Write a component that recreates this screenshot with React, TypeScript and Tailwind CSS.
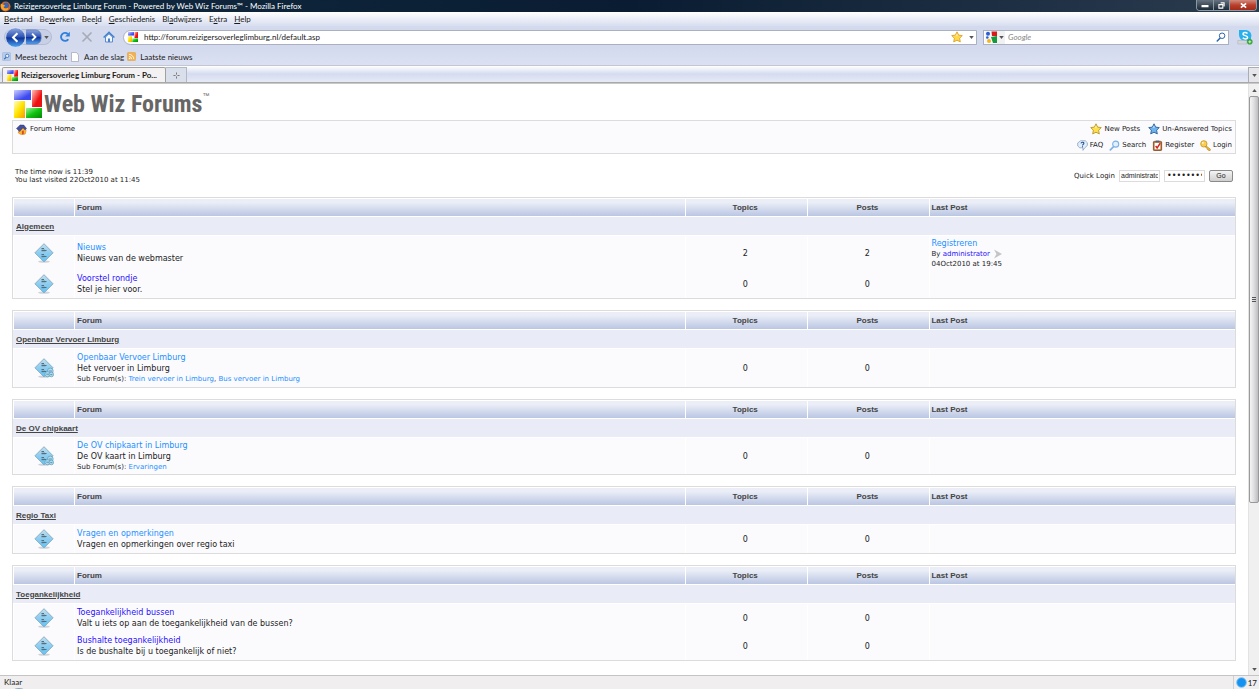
import type { ReactNode } from "react";

type SubForum = { name: string };
type Forum = {
  name: string;
  text: string;
  topics: number;
  posts: number;
  visited?: boolean;
  subs?: SubForum[];
  last?: { title: string; by: string; date: string };
  height: string;
};

const categories: { name: string; forums: Forum[] }[] = [
  {
    name: "Algemeen",
    forums: [
      {
        name: "Nieuws",
        text: "Nieuws van de webmaster",
        topics: 2,
        posts: 2,
        visited: true,
        last: { title: "Registreren", by: "administrator", date: "04Oct2010 at 19:45" },
        height: "h-[34px]",
      },
      { name: "Voorstel rondje", text: "Stel je hier voor.", topics: 0, posts: 0, height: "h-7" },
    ],
  },
  {
    name: "Openbaar Vervoer Limburg",
    forums: [
      {
        name: "Openbaar Vervoer Limburg",
        text: "Het vervoer in Limburg",
        topics: 0,
        posts: 0,
        visited: true,
        subs: [{ name: "Trein vervoer in Limburg" }, { name: "Bus vervoer in Limburg" }],
        height: "h-[38px]",
      },
    ],
  },
  {
    name: "De OV chipkaart",
    forums: [
      {
        name: "De OV chipkaart in Limburg",
        text: "De OV kaart in Limburg",
        topics: 0,
        posts: 0,
        visited: true,
        subs: [{ name: "Ervaringen" }],
        height: "h-9",
      },
    ],
  },
  {
    name: "Regio Taxi",
    forums: [
      {
        name: "Vragen en opmerkingen",
        text: "Vragen en opmerkingen over regio taxi",
        topics: 0,
        posts: 0,
        visited: true,
        height: "h-7",
      },
    ],
  },
  {
    name: "Toegankelijkheid",
    forums: [
      {
        name: "Toegankelijkheid bussen",
        text: "Valt u iets op aan de toegankelijkheid van de bussen?",
        topics: 0,
        posts: 0,
        height: "h-7",
      },
      {
        name: "Bushalte toegankelijkheid",
        text: "Is de bushalte bij u toegankelijk of niet?",
        topics: 0,
        posts: 0,
        height: "h-7",
      },
    ],
  },
];

const menu = [
  ["", "B", "estand"],
  ["Be", "w", "erken"],
  ["Bee", "l", "d"],
  ["", "G", "eschiedenis"],
  ["Bl", "a", "dwijzers"],
  ["E", "x", "tra"],
  ["", "H", "elp"],
];

function Logo({ className }: { className: string }) {
  return (
    <svg viewBox="0 0 28 28" className={className} aria-hidden="true">
      <defs>
        <linearGradient id="lb" x1="0" x2="1" y2="1">
          <stop offset="0" stopColor="#d0d2ff" />
          <stop offset=".7" stopColor="#3c48f0" />
        </linearGradient>
        <linearGradient id="lr" x1="0" x2="1" y2="1">
          <stop offset="0" stopColor="#ffc4bc" />
          <stop offset=".6" stopColor="#ee1111" />
        </linearGradient>
        <linearGradient id="ly" x1="0" x2="1" y2="1">
          <stop offset="0" stopColor="#fffdc8" />
          <stop offset=".5" stopColor="#ffe400" />
          <stop offset="1" stopColor="#f59a00" />
        </linearGradient>
        <linearGradient id="lg" x1="0" x2="1" y2="1">
          <stop offset="0" stopColor="#9cf59c" />
          <stop offset=".5" stopColor="#11c411" />
          <stop offset="1" stopColor="#058505" />
        </linearGradient>
      </defs>
      <path fill="url(#lb)" d="M0 0h17v10H0z" />
      <path fill="url(#lr)" d="M18 0h10v17H18z" />
      <path fill="url(#ly)" d="M0 11h11v17H0z" />
      <path fill="url(#lg)" d="M12 18h16v10H12z" />
    </svg>
  );
}

function Star({ fill, stroke }: { fill: string; stroke: string }) {
  return (
    <svg viewBox="0 0 12 12" className="size-3 shrink-0" aria-hidden="true">
      <path
        d="M6 .8l1.6 3.3 3.7.5-2.7 2.6.7 3.7L6 9.2l-3.300 1.700.700-3.700L.7 4.600l3.700-.5z"
        fill={fill}
        stroke={stroke}
        strokeWidth=".9"
        strokeLinejoin="round"
      />
      <path d="M6 2.500l.9 2.100-2.500.5z" fill="#fff" opacity=".6" />
    </svg>
  );
}

function FirefoxIcon() {
  return (
    <svg viewBox="0 0 12 12" className="size-[11px]" aria-hidden="true">
      <circle cx="6" cy="6" r="5.5" fill="#e2661a" />
      <circle cx="6.6" cy="4.8" r="3.2" fill="#3867b5" />
      <path d="M.8 3c.8.3 1.700.2 2.500 1 1 .1 2 .3 2 1.200-.2.8-1.300.8-1.500 1.600 1 1.900 3.600 1.800 5.200.2C9.500 9.500 6.500 11 4 10 1.500 9 .3 6 .8 3z" fill="#f9a72b" />
    </svg>
  );
}

function HomeIcon() {
  return (
    <svg viewBox="0 0 12 12" className="size-3" aria-hidden="true">
      <path d="M2.500 6v5h7V6L6 2.800z" fill="#f2f7ff" stroke="#4a80c8" strokeWidth=".9" />
      <path d="M.6 6.500L6 1.400l5.400 5.100" fill="none" stroke="#4080cc" strokeWidth="1.500" />
      <path d="M5 7.500h2V11H5z" fill="#4a80c8" />
    </svg>
  );
}

function ForumHomeIcon() {
  return (
    <svg viewBox="0 0 12 12" className="size-[11px]" aria-hidden="true">
      <path d="M3 6l5-2 3 3-1 4-4 .8-3.500-2z" fill="#f9b52c" stroke="#d8761a" strokeWidth=".6" />
      <path d="M.5 4.800L4.500 1l4 .2L11.500 5 10 6.600 7.600 4 4 8.300z" fill="#44509c" stroke="#2a3372" strokeWidth=".5" />
      <path d="M6.500 7.500l2-.5v4l-2 .5z" fill="#dc4a22" />
    </svg>
  );
}

function FaqIcon() {
  return (
    <svg viewBox="0 0 12 12" className="size-[11px]" aria-hidden="true">
      <path d="M4 .8h5l2.300 2.200v3L8.500 8.500 6.500 11.300V8.500H3L.8 6.500V3.200z" fill="#e3eefb" stroke="#7f9cbd" strokeWidth=".8" />
      <path d="M4.300 3.600C4.600 2 7.600 2 7.500 3.700 7.400 4.700 6 4.800 6 6M6 6.800v1" fill="none" stroke="#205293" strokeWidth="1.100" />
    </svg>
  );
}

function SearchIcon({ className, stroke, fill }: { className: string; stroke: string; fill: string }) {
  return (
    <svg viewBox="0 0 12 12" className={className} aria-hidden="true">
      <path d="M5 7.300L1.500 10.800" stroke={stroke} strokeWidth="1.800" strokeLinecap="round" />
      <circle cx="7.300" cy="4.500" r="3.300" fill={fill} stroke={stroke} strokeWidth="1.200" />
    </svg>
  );
}

function RegisterIcon() {
  return (
    <svg viewBox="0 0 12 12" className="size-[11px]" aria-hidden="true">
      <rect x="1.500" y="1.500" width="9" height="10" rx="1" fill="#b3651f" stroke="#6f3c10" strokeWidth=".8" />
      <path d="M2.800 3h6.400v7.200H2.800z" fill="#fff" />
      <path d="M4 .6h4v2H4z" fill="#5a6070" />
      <path d="M4 6.500L5.600 8.600 9 3.500" fill="none" stroke="#d81f1f" strokeWidth="1.600" />
    </svg>
  );
}

function KeyIcon() {
  return (
    <svg viewBox="0 0 12 12" className="size-[11px]" aria-hidden="true">
      <path d="M5.500 5.500l5.800 4.500-.2 1.400-1.700.1-.4-1.200-1.200-.1-.1-1.200L5 7z" fill="#f3bd2a" stroke="#a87412" strokeWidth=".6" />
      <circle cx="4.200" cy="4.200" r="3.500" fill="#f9cf4a" stroke="#b98216" strokeWidth=".7" />
      <circle cx="3.100" cy="3.200" r=".9" fill="#fff" />
    </svg>
  );
}

function ForumIcon({ subs }: { subs?: boolean }) {
  return (
    <svg viewBox="0 0 20 20" className="ml-5 size-5" aria-hidden="true">
      <defs>
        <linearGradient id="fi" x1="0" x2="0" y1="0" y2="1">
          <stop offset="0" stopColor="#c4dfec" />
          <stop offset=".5" stopColor="#8ecdf0" />
          <stop offset="1" stopColor="#5cc4fa" />
        </linearGradient>
      </defs>
      <ellipse cx="10" cy="18.600" rx="6" ry="1.200" fill="#cfd3d8" />
      <path d="M10 .7l9.100 9.100-9.100 9.100L.9 9.800z" fill="url(#fi)" stroke="#83a9bd" strokeWidth=".9" strokeLinejoin="round" />
      <path d="M7.500 5.500h2.500M7.500 7.500h5M7.500 11.500h2.500M7.500 13.500h5" stroke="#4f6f82" />
      <path d="M7.500 6.500h3.500M7.500 8.500h4M7.500 12.500h3.500M7.500 14.500h3" stroke="#86a9bb" strokeWidth=".7" />
      {subs && (
        <g fill="#a9dcf5" stroke="#5f99b6" strokeWidth=".7">
          <circle cx="16.300" cy="13" r="2.900" />
          <circle cx="13.500" cy="16.200" r="2.600" />
          <circle cx="17.300" cy="16.500" r="2.300" />
          <path d="M14.800 13h3M12.300 16.200h2.400M16.300 16.600h2" stroke="#4f6f82" />
        </g>
      )}
    </svg>
  );
}

function Caret({ className = "" }: { className?: string }) {
  return (
    <svg viewBox="0 0 6 4" className={`h-[3px] w-[5px] ${className}`} aria-hidden="true">
      <path d="M0 0h6L3 4z" fill="#555" />
    </svg>
  );
}

function TitleBar() {
  return (
    <header className="flex h-3 items-center bg-linear-to-r from-[#102a40] via-[#0a1c31] to-[#2b3c4f] text-white">
      <FirefoxIcon />
      <span className="ml-[3px] flex-1 truncate text-[8px] leading-3">
        Reizigersoverleg Limburg Forum - Powered by Web Wiz Forums™ - Mozilla Firefox
      </span>
      <div className="mr-[2px] flex h-[11px] self-start overflow-hidden rounded-b-sm border border-t-0 border-[#8d98a5]">
        <button aria-label="Minimize" className="flex w-[17px] items-center justify-center border-r border-[#8d98a5] bg-linear-to-b from-[#66727f] to-[#1d2a38]">
          <svg viewBox="0 0 8 6" className="h-[6px] w-2"><path d="M.5 3h7v2.200h-7z" fill="#fff" /></svg>
        </button>
        <button aria-label="Restore" className="flex w-4 items-center justify-center border-r border-[#8d98a5] bg-linear-to-b from-[#66727f] to-[#1d2a38]">
          <svg viewBox="0 0 8 8" className="size-[7px]"><path d="M3 1h4v4M1 3h4.500v4H1z" fill="none" stroke="#fff" strokeWidth="1.200" /></svg>
        </button>
        <button aria-label="Close" className="flex w-[26px] items-center justify-center bg-linear-to-b from-[#d08a7e] via-[#b8402c] to-[#a52a18]">
          <svg viewBox="0 0 8 8" className="size-[7px]"><path d="M1 1.500l6 5M7 1.500l-6 5" stroke="#fff" strokeWidth="1.900" /></svg>
        </button>
      </div>
    </header>
  );
}

function MenuBar() {
  return (
    <nav className="flex h-[14px] items-center gap-[7px] bg-linear-to-b from-white to-[#d8def0] pl-1 text-[8px] leading-3">
      {menu.map(([a, key, b]) => (
        <button key={a + key + b}>
          {a}
          <u>{key}</u>
          {b}
        </button>
      ))}
    </nav>
  );
}

function NavToolbar() {
  return (
    <div className="flex h-[22px] items-center bg-[#d3daed] pl-1 pr-[6px]">
      <div className="flex h-4 w-12 items-center rounded-full border border-[#b3bdd6] bg-[#c8d0e5]">
        <button aria-label="Terug">
          <svg viewBox="0 0 22 22" className="size-[21px]">
            <defs>
              <linearGradient id="bk" x1="0" x2="0" y1="0" y2="1">
                <stop offset="0" stopColor="#8fa8de" />
                <stop offset=".48" stopColor="#2c52b4" />
                <stop offset=".52" stopColor="#0f3298" />
                <stop offset="1" stopColor="#4fa8f4" />
              </linearGradient>
            </defs>
            <circle cx="11" cy="11" r="10.300" fill="url(#bk)" stroke="#e4eaf6" strokeWidth=".8" />
            <path d="M13 6.500L8.500 11l4.500 4.500" fill="none" stroke="#fff" strokeWidth="2.200" />
          </svg>
        </button>
        <button aria-label="Vooruit">
          <svg viewBox="0 0 17 16" className="h-4 w-4">
            <rect x="-4" y=".5" width="20" height="15" rx="6" fill="url(#bk)" stroke="#5874b4" strokeWidth=".8" />
            <path d="M6.500 4.500L10 8l-3.500 3.500" fill="none" stroke="#fff" strokeWidth="2" />
          </svg>
        </button>
        <Caret className="ml-[2px]" />
      </div>
      <div className="ml-[7px] flex items-center gap-[10px]">
        <button aria-label="Vernieuwen">
          <svg viewBox="0 0 12 12" className="size-3">
            <path d="M9.300 8.200A4 4 0 1 1 8.800 3" fill="none" stroke="#2f7fdc" strokeWidth="1.900" />
            <path d="M10.800.8v4.700H6.200z" fill="#2f7fdc" />
          </svg>
        </button>
        <button aria-label="Stoppen">
          <svg viewBox="0 0 12 12" className="size-3">
            <path d="M1.500 1.500l9 9M10.500 1.500l-9 9" stroke="#a7abb5" strokeWidth="1.600" />
          </svg>
        </button>
        <button aria-label="Startpagina">
          <HomeIcon />
        </button>
      </div>
      <div className="ml-2 flex h-[15px] flex-1 items-center rounded-l-full border border-[#aab0bf] bg-white pl-1">
        <Logo className="size-[10px]" />
        <input
          aria-label="Adres"
          defaultValue="http://forum.reizigersoverleglimburg.nl/default.asp"
          className="ml-[6px] min-w-0 flex-1 text-[8px] leading-3 outline-none"
        />
        <Star fill="#ffd94a" stroke="#dba12a" />
        <Caret className="mr-[2px] ml-[6px]" />
      </div>
      <div className="ml-[6px] flex h-[15px] w-[246px] items-center border border-[#aab0bf] bg-white">
        <svg viewBox="0 0 12 12" className="ml-[1px] size-3" aria-hidden="true">
          <path d="M0 0h12v12H0z" fill="#f5f7ff" />
          <path d="M6.500.5H12V5H7z" fill="#d91a1a" />
          <path d="M6 6l6-1v7H8z" fill="#159a3a" />
          <circle cx="3" cy="2.800" r="2" fill="#2a5fd0" />
          <circle cx="2.300" cy="6.500" r="1.300" fill="#2a5fd0" />
          <circle cx="4" cy="10" r="2" fill="#f6b51c" />
        </svg>
        <div className="flex h-full w-[8px] items-center justify-center bg-[#f1f1f1]">
          <Caret />
        </div>
        <input
          aria-label="Zoeken"
          placeholder="Google"
          className="ml-[3px] min-w-0 flex-1 text-[8px] leading-3 italic outline-none placeholder:text-[#888]"
        />
        <SearchIcon className="mr-[2px] size-[10px]" stroke="#2c66ae" fill="#fff" />
      </div>
      <button aria-label="Skype" className="ml-2">
        <svg viewBox="0 0 16 16" className="size-4">
          <path d="M2 1h7a5.500 5.500 0 0 1 5 7.500V12H8A6 6 0 0 1 2 6z" fill="#27b0ec" />
          <path d="M10.500 4.500C9 3 5.800 3.400 6 5.200c.2 1.800 4.600 1.100 4.600 3.200 0 1.900-3.400 2-4.800.3" fill="none" stroke="#fff" strokeWidth="1.500" />
          <path d="M.8 11.500h9V15h-9z" fill="#d3d7da" stroke="#a9afb4" strokeWidth=".5" />
          <circle cx="12.800" cy="12.800" r="2.800" fill="#37a337" />
          <path d="M12.800 11.300v3M11.300 12.800h3" stroke="#d8f5d0" strokeWidth=".9" />
        </svg>
      </button>
    </div>
  );
}

function Bookmark({ icon, children }: { icon: ReactNode; children: ReactNode }) {
  return (
    <a href="#" className="flex items-center gap-1">
      {icon}
      {children}
    </a>
  );
}

function BookmarksBar() {
  return (
    <div className="flex h-[17px] items-center gap-[3px] bg-linear-to-b from-[#d3daed] to-[#dbe1f2] pl-[2px] text-[8px] leading-3">
      <Bookmark
        icon={
          <svg viewBox="0 0 10 10" className="size-[9px]">
            <rect x=".5" y=".5" width="9" height="9" rx="1" fill="#b4cceb" stroke="#9db8dc" strokeWidth=".7" />
            <path d="M4.500 6L2.500 8" stroke="#2f62a8" strokeWidth="1.200" />
            <circle cx="5.800" cy="4.300" r="1.900" fill="#eaf3ff" stroke="#2f62a8" strokeWidth=".8" />
          </svg>
        }
      >
        Meest bezocht
      </Bookmark>
      <Bookmark
        icon={
          <svg viewBox="0 0 10 10" className="size-[10px]">
            <path d="M1.500.5h5L8.500 3v6.500h-7z" fill="#fff" stroke="#a0a4ac" strokeWidth=".7" />
          </svg>
        }
      >
        Aan de slag
      </Bookmark>
      <Bookmark
        icon={
          <svg viewBox="0 0 10 10" className="size-[9px]">
            <rect x=".5" y=".5" width="9" height="9" rx="1" fill="#f5b04c" stroke="#dfa040" strokeWidth=".6" />
            <path d="M2.200 5a2.900 2.900 0 0 1 2.900 2.900M2.200 2.600a5.300 5.300 0 0 1 5.300 5.300" fill="none" stroke="#fff" />
            <circle cx="2.800" cy="7.300" r=".8" fill="#fff" />
          </svg>
        }
      >
        Laatste nieuws
      </Bookmark>
    </div>
  );
}

function TabBar() {
  return (
    <div className="flex h-[18px] items-end border-y border-t-[#c3c7d0] border-b-[#a9a9a9] bg-linear-to-b from-white via-[#d5dcf0] to-[#e6eaf6]">
      <div className="ml-[2px] flex h-[15px] w-[164px] items-center rounded-t-xs border border-b-0 border-[#a0a0a0] bg-[#f3f1f1] px-1">
        <Logo className="size-[11px] shrink-0" />
        <span className="ml-[3px] truncate text-[8px] leading-3 font-bold">Reizigersoverleg Limburg Forum - Po...</span>
      </div>
      <button aria-label="Nieuw tabblad" className="flex h-[15px] w-[21px] items-center justify-center border border-b-0 border-l-0 border-[#b4b8c4] bg-[#dadfec]">
        <svg viewBox="0 0 8 8" className="size-[7px]">
          <path d="M4 .5v2.500M4 5v2.500M.5 4H3M5 4h2.500" stroke="#777" strokeWidth="1.100" />
        </svg>
      </button>
      <button aria-label="Alle tabbladen" className="ml-auto flex h-[15px] w-[11px] items-center justify-center border border-r-0 border-b-0 border-[#a9adb8] bg-[#e6e6ea]">
        <Caret />
      </button>
    </div>
  );
}

function ForumTable({ name, forums }: { name: string; forums: Forum[] }) {
  return (
    <table className="w-full table-fixed border-separate border-spacing-0 border border-[#dcdcdc] bg-white text-[8px] leading-[11px]">
      <colgroup>
        <col className="w-[5%]" />
        <col className="w-[50%]" />
        <col className="w-[10%]" />
        <col className="w-[10%]" />
        <col className="w-[25%]" />
      </colgroup>
      <thead className="font-['Liberation_Sans',Arial,sans-serif] text-[#444]">
        <tr className="h-[19px] [&>th]:border [&>th]:border-r-0 [&>th]:border-white [&>th]:bg-linear-to-b [&>th]:from-[#ebeef7] [&>th]:from-20% [&>th]:to-[#bac6e2]">
          <th></th>
          <th className="pl-[2px] text-left">Forum</th>
          <th className="pr-[3px]">Topics</th>
          <th className="pr-[3px]">Posts</th>
          <th className="pl-[1px] text-left">Last Post</th>
        </tr>
      </thead>
      <tbody>
        <tr className="h-[19px]">
          <td colSpan={5} className="border-b border-white bg-[#e9ecf6] pl-[3px] font-['Liberation_Sans',Arial,sans-serif] font-bold text-[#444]">
            <a href="#" className="underline">
              {name}
            </a>
          </td>
        </tr>
        {forums.map((f) => (
          <tr key={f.name} className={`${f.height} [&>td]:border-l [&>td]:border-white [&>td]:bg-[#fbfbfe]`}>
            <td>
              <ForumIcon subs={!!f.subs} />
            </td>
            <td className="pl-[2px]">
              <a href="#" className={f.visited ? "text-[#1e90ff]" : "text-[#2a10ff]"}>
                {f.name}
              </a>
              <div>{f.text}</div>
              {f.subs && (
                <div className="text-[7px]">
                  Sub Forum(s):{" "}
                  {f.subs.map((s, i) => (
                    <span key={s.name}>
                      {i > 0 && ", "}
                      <a href="#" className="text-[#1e90ff]">
                        {s.name}
                      </a>
                    </span>
                  ))}
                </div>
              )}
            </td>
            <td className="pr-[3px] text-center">{f.topics}</td>
            <td className="pr-[3px] text-center">{f.posts}</td>
            <td className="pl-[1px]">
              {f.last && (
                <>
                  <a href="#" className="block leading-[11px] text-[#1e90ff]">
                    {f.last.title}
                  </a>
                  <div className="flex items-center text-[7px] leading-[10px]">
                    By&nbsp;
                    <a href="#" className="text-[#2a10ff]">
                      {f.last.by}
                    </a>
                    <svg viewBox="0 0 8 10" className="ml-1 h-[10px] w-2" aria-hidden="true">
                      <path d="M0 .5L8 5 0 9.500 2.500 5z" fill="#c4c4c4" />
                    </svg>
                  </div>
                  <div className="text-[7px] leading-[10px]">{f.last.date}</div>
                </>
              )}
            </td>
          </tr>
        ))}
      </tbody>
    </table>
  );
}

function ForumNav() {
  return (
    <div className="flex h-[34px] justify-between border border-[#dcdcdc] bg-[#fbfbfe] px-[3px] text-[7px] leading-4">
      <a href="#" className="flex h-4 items-center gap-[3px]">
        <ForumHomeIcon />
        Forum Home
      </a>
      <div className="flex flex-col items-end">
        <div className="flex gap-2">
          <a href="#" className="flex items-center gap-[2px]">
            <Star fill="#ffe04a" stroke="#b9952a" />
            New Posts
          </a>
          <a href="#" className="flex items-center gap-[2px]">
            <Star fill="#6db4ee" stroke="#2d5f9a" />
            Un-Answered Topics
          </a>
        </div>
        <div className="flex gap-[6px]">
          <a href="#" className="flex items-center gap-[2px]">
            <FaqIcon />
            FAQ
          </a>
          <a href="#" className="flex items-center gap-[2px]">
            <SearchIcon className="size-[11px]" stroke="#7fb0e2" fill="#dff0ff" />
            Search
          </a>
          <a href="#" className="flex items-center gap-[2px]">
            <RegisterIcon />
            Register
          </a>
          <a href="#" className="flex items-center gap-[2px]">
            <KeyIcon />
            Login
          </a>
        </div>
      </div>
    </div>
  );
}

function QuickLogin() {
  return (
    <form className="flex items-center gap-1" onSubmit={(e) => e.preventDefault()}>
      <label htmlFor="member">Quick Login</label>
      <input
        id="member"
        defaultValue="administrato"
        className="h-3 w-[41px] border border-[#dcdcdc] bg-white px-[1px] font-['Liberation_Sans',Arial,sans-serif] text-[7px] outline-none"
      />
      <input
        aria-label="Password"
        type="password"
        defaultValue="wachtwoord12"
        className="h-3 w-[41px] border border-[#dcdcdc] bg-white px-[2px] text-[8px] outline-none"
      />
      <button className="h-3 w-6 rounded-xs border border-[#8a8a8a] bg-linear-to-b from-[#f4f4f4] to-[#cfcfcf] font-['Liberation_Sans',Arial,sans-serif] text-[7px] leading-[9px]">
        Go
      </button>
    </form>
  );
}

function Scrollbar() {
  return (
    <div className="flex w-[11px] shrink-0 flex-col items-center border-l border-[#e3e3e3] bg-[#f0f0f0]">
      <div className="flex h-3 items-center">
        <Caret className="rotate-180" />
      </div>
      <div className="flex h-[407px] w-[10px] flex-col items-center justify-center gap-[1px] rounded-xs border border-[#999] bg-linear-to-r from-[#f5f5f5] via-[#dedee0] to-[#bdbdc2]">
        <i className="h-px w-1 bg-[#555]" />
        <i className="h-px w-1 bg-[#555]" />
        <i className="h-px w-1 bg-[#555]" />
      </div>
      <div className="mt-auto flex h-3 items-center">
        <Caret />
      </div>
    </div>
  );
}

export default function App() {
  return (
    <div className="flex h-screen flex-col overflow-hidden bg-white font-['Lato','Open_Sans',sans-serif] text-[#1a1a1a]">
      <TitleBar />
      <MenuBar />
      <NavToolbar />
      <BookmarksBar />
      <TabBar />
      <div className="flex min-h-0 flex-1 border-t border-[#c8c8c8]">
        <main className="min-w-0 flex-1 overflow-hidden px-3 pt-1 font-['DejaVu_Sans',Verdana,sans-serif] text-[#222]">
          <a href="#" className="flex h-8 items-start pl-[2px]">
            <Logo className="mt-[2px] size-7" />
            <span className="ml-[2px] font-['Roboto_Condensed','Open_Sans_Condensed',sans-serif] text-2xl leading-8 font-bold text-[#666]">
              Web Wiz Forums
            </span>
            <sup className="top-0 font-['Liberation_Sans',sans-serif] text-[7px] leading-4 text-[#666]">™</sup>
          </a>
          <ForumNav />
          <div className="flex h-[43px] items-center justify-between px-[3px] text-[7px] leading-2">
            <p>
              The time now is 11:39
              <br />
              You last visited 22Oct2010 at 11:45
            </p>
            <QuickLogin />
          </div>
          <div className="flex flex-col gap-[11px]">
            {categories.map((c) => (
              <ForumTable key={c.name} name={c.name} forums={c.forums} />
            ))}
          </div>
        </main>
        <Scrollbar />
      </div>
      <footer className="flex h-[14px] shrink-0 items-center border-t border-[#c4c4c4] bg-[#f0eeee] pl-1 text-[8px] leading-3">
        <div className="flex-1 self-stretch">
          Klaar
          <svg viewBox="0 0 20 4" className="ml-[5px] h-1 w-5" aria-hidden="true">
            <ellipse cx="10" cy="8" rx="9.500" ry="7.500" fill="#bfd7ea" stroke="#86a5c2" />
          </svg>
        </div>
        <div className="flex h-full items-center gap-[1px] border-l border-[#d0d0d0] px-[2px]">
          <svg viewBox="0 0 12 12" className="size-[11px]" aria-hidden="true">
            <circle cx="6" cy="6" r="5.300" fill="#1592f0" stroke="#86c4f2" />
          </svg>
          17
        </div>
      </footer>
    </div>
  );
}
